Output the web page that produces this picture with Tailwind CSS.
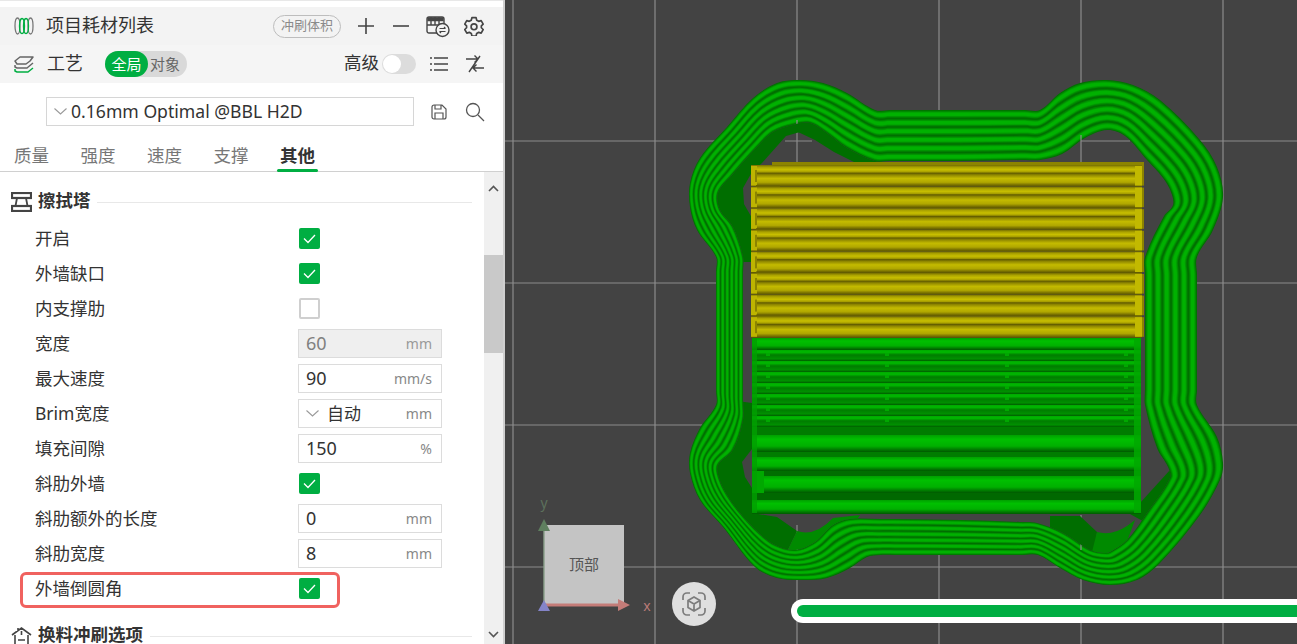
<!DOCTYPE html>
<html lang="zh">
<head>
  <meta charset="UTF-8">
  <title>Slicer</title>
  <script src="https://cdn.jsdelivr.net/npm/@tailwindcss/browser@4"></script>
</head>
<body class="w-[1297px] h-[644px] overflow-hidden bg-[#434343] font-['Noto_Sans','Noto_Sans_CJK_SC',sans-serif] text-[#333]">
<div class="flex h-[644px]">
  <!-- left panel -->
  <div class="w-[503px] h-[644px] bg-white flex flex-col shrink-0 overflow-hidden">
    <div class="h-[7px] bg-white border-t border-[#e8e8e8]"></div>
    <!-- filament row -->
    <div class="h-[38px] bg-[#f3f3f3] flex items-center relative">
      <svg class="ml-[14px] w-[20px] h-[20px]" viewBox="0 0 20 20" fill="none" stroke-width="1.300">
        <ellipse cx="3.500" cy="10" rx="2.500" ry="8" stroke="#777"/>
        <ellipse cx="16.500" cy="10" rx="2.500" ry="8" stroke="#777"/>
        <ellipse cx="8" cy="10" rx="2.500" ry="7.500" stroke="#00ae42"/>
        <ellipse cx="12" cy="10" rx="2.500" ry="7.500" stroke="#00ae42"/>
      </svg>
      <span class="ml-[12px] w-[107px] text-[18px] leading-none pb-[3px] text-[#333] whitespace-nowrap">项目耗材列表</span>
      <span class="ml-[120px] w-[68px] h-[23px] rounded-full border border-[#bdbdbd] flex items-center justify-center text-[13px] text-[#8a8a8a]">冲刷体积</span>
      <svg class="ml-[17px] w-[16px] h-[16px]" viewBox="0 0 16 16" stroke="#444" stroke-width="1.600"><path d="M8 0v16M0 8h16"/></svg>
      <svg class="ml-[19px] w-[16px] h-[16px]" viewBox="0 0 16 16" stroke="#444" stroke-width="1.600"><path d="M0 8h16"/></svg>
      <svg class="ml-[17px] w-[24px] h-[24px]" viewBox="0 0 24 24" fill="none" stroke="#444" stroke-width="1.400">
        <rect x="1" y="3" width="17" height="16" rx="2"/>
        <path d="M1 11h17M5 3v8M9 3v8M13 3v8" />
        <path d="M2 4h15v2.500H2z" fill="#444"/>
        <circle cx="16.500" cy="16" r="6.500" fill="#f3f3f3"/>
        <path d="M13.500 14.500h6M19.500 14.500l-1.500-1.500M19.500 17.500h-6M13.500 17.500l1.500 1.500" stroke-width="1.100"/>
      </svg>
      <svg class="ml-[14px] w-[20px] h-[20px]" viewBox="0 0 24 24" fill="none" stroke="#444" stroke-width="2" stroke-linejoin="round">
        <path d="M9.500 2h5l.7 3 2.400 1.400 3-.9 2.400 4.300-2.200 2.100v2.200l2.200 2.100-2.400 4.300-3-.9-2.400 1.400-.7 3h-5l-.7-3-2.400-1.400-3 .9L.9 16.200l2.200-2.100v-2.200L.9 9.800l2.400-4.300 3 .9 2.400-1.400z"/>
        <circle cx="12" cy="13" r="3.500"/>
      </svg>
    </div>
    <!-- process row -->
    <div class="h-[38px] bg-[#f5f5f5] flex items-center">
      <svg class="ml-[14px] w-[20px] h-[20px]" viewBox="0 0 20 20" fill="none" stroke-width="1.500" stroke-linejoin="round">
        <path d="M1 7l5-4h13l-3 4-4 3H3z" stroke="#666"/>
        <path d="M1 11v2l2 1h10l6-5" stroke="#666"/>
        <path d="M1 15v2l2 1h11l5-4" stroke="#00ae42"/>
      </svg>
      <span class="ml-[13px] text-[18px] leading-none pb-[3px]">工艺</span>
      <div class="ml-[22px] w-[82px] h-[26px] rounded-full bg-[#d9d9d9] flex items-center text-[15px]">
        <span class="w-[43px] h-[26px] rounded-full bg-[#00ae42] text-white flex items-center justify-center">全局</span>
        <span class="ml-[2px] text-[#666]">对象</span>
      </div>
      <span class="ml-[157px] text-[17.5px] leading-none pb-[3px]">高级</span>
      <div class="ml-[3px] w-[34px] h-[20px] rounded-full bg-[#dcdcdc] flex items-center pl-[1px]">
        <div class="w-[18px] h-[18px] rounded-full bg-white"></div>
      </div>
      <svg class="ml-[14px] w-[18px] h-[16px]" viewBox="0 0 18 16" stroke="#444" stroke-width="1.500"><path d="M4 2h14M4 8h14M4 14h14M0 2h2M0 8h2M0 14h2"/></svg>
      <svg class="ml-[17px] w-[20px] h-[20px]" viewBox="0 0 20 20" fill="none" stroke="#444" stroke-width="1.400"><path d="M1 5h12M9.500 1.500L13 5l-3.500 3.500M19 14H8M11.500 10.500L8 14l3.500 3.500M4 18L15 2"/></svg>
    </div>
    <!-- preset -->
    <div class="h-[57px] flex items-center pl-[46px]">
      <div class="w-[368px] h-[29px] border border-[#d6d6d6] flex items-center">
        <svg class="ml-[7px] w-[13px] h-[7px]" viewBox="0 0 13 7" fill="none" stroke="#9a9a9a" stroke-width="1.100"><path d="M0.500 0.500l6 5.500 6-5.500"/></svg>
        <span class="ml-[4px] text-[17.6px] leading-none pt-[1px] text-[#333] whitespace-nowrap">0.16mm Optimal @BBL H2D</span>
      </div>
      <svg class="ml-[17px] w-[16px] h-[16px]" viewBox="0 0 16 16" fill="none" stroke="#555" stroke-width="1.200"><path d="M1 3a2 2 0 012-2h8l4 4v8a2 2 0 01-2 2H3a2 2 0 01-2-2zM4 1v4h6V1M4 15V9h8v6"/></svg>
      <svg class="ml-[18px] w-[20px] h-[20px]" viewBox="0 0 20 20" fill="none" stroke="#555" stroke-width="1.300"><circle cx="8" cy="8" r="6.500"/><path d="M13 13l6 6"/></svg>
    </div>
    <!-- tabs -->
    <div class="h-[32px] border-b border-[#d0d0d0] flex pl-[14px] gap-[31.5px] text-[17.5px] leading-[30px] text-[#777] shrink-0">
      <span>质量</span><span>强度</span><span>速度</span><span>支撑</span>
      <span class="relative font-bold text-[#333]">其他<span class="absolute left-[-3px] right-[-3px] bottom-[-1px] h-[3px] rounded-full bg-[#00ae42]"></span></span>
    </div>
    <!-- settings -->
    <div class="relative flex flex-1 min-h-0 overflow-hidden">
      <div class="w-[484px] text-[17.5px] text-[#333]">
        <div class="mt-[11px] h-[38px] flex items-center">
          <svg class="ml-[11px] w-[21px] h-[20px]" viewBox="0 0 21 20" fill="none" stroke="#444" stroke-width="2.200"><rect x="1" y="1" width="19" height="5"/><rect x="1" y="14" width="19" height="5"/><path d="M6 6l-1.500 8M15 6l1.500 8" stroke-width="1.800"/></svg>
          <span class="ml-[6px] w-[53px] font-bold text-[17.5px] leading-none pb-[3px] whitespace-nowrap">擦拭塔</span>
          <div class="ml-[6px] w-[375px] h-px bg-[#e8e8e8]"></div>
        </div>
        <div class="h-[35px] flex items-center"><span class="w-[299px] pl-[35px] pb-[1px]">开启</span>
          <span class="w-[21px] h-[21px] rounded-[2px] bg-[#00ae42] flex items-center justify-center"><svg class="w-[13px] h-[10px]" viewBox="0 0 13 10" fill="none" stroke="#fff" stroke-width="1.300"><path d="M1 4.500l4 4 7-7.500"/></svg></span></div>
        <div class="h-[35px] flex items-center"><span class="w-[299px] pl-[35px] pb-[1px]">外墙缺口</span>
          <span class="w-[21px] h-[21px] rounded-[2px] bg-[#00ae42] flex items-center justify-center"><svg class="w-[13px] h-[10px]" viewBox="0 0 13 10" fill="none" stroke="#fff" stroke-width="1.300"><path d="M1 4.500l4 4 7-7.500"/></svg></span></div>
        <div class="h-[35px] flex items-center"><span class="w-[299px] pl-[35px] pb-[1px]">内支撑肋</span>
          <span class="w-[21px] h-[21px] rounded-[2px] border-2 border-[#cfcfcf] bg-white"></span></div>
        <div class="h-[35px] flex items-center"><span class="w-[298px] pl-[35px] pb-[1px]">宽度</span>
          <div class="w-[144px] h-[29px] border border-[#dcdcdc] bg-[#efefef] flex items-center justify-between pl-[7px] pr-[9px]"><span class="text-[18px] text-[#808080]">60</span><span class="text-[14px] text-[#999]">mm</span></div></div>
        <div class="h-[35px] flex items-center"><span class="w-[298px] pl-[35px] pb-[1px]">最大速度</span>
          <div class="w-[144px] h-[29px] border border-[#dcdcdc] flex items-center justify-between pl-[7px] pr-[9px]"><span class="text-[18px]">90</span><span class="text-[14px] text-[#888]">mm/s</span></div></div>
        <div class="h-[35px] flex items-center"><span class="w-[298px] pl-[35px] pb-[1px]">Brim宽度</span>
          <div class="w-[144px] h-[29px] border border-[#dcdcdc] flex items-center pl-[7px] pr-[9px]"><svg class="w-[13px] h-[7px]" viewBox="0 0 13 7" fill="none" stroke="#9a9a9a" stroke-width="1.100"><path d="M0.500 0.500l6 5.500 6-5.500"/></svg><span class="ml-[8px] text-[17px]">自动</span><span class="ml-auto text-[14px] text-[#888]">mm</span></div></div>
        <div class="h-[35px] flex items-center"><span class="w-[298px] pl-[35px] pb-[1px]">填充间隙</span>
          <div class="w-[144px] h-[29px] border border-[#dcdcdc] flex items-center justify-between pl-[7px] pr-[9px]"><span class="text-[18px]">150</span><span class="text-[14px] text-[#888]">%</span></div></div>
        <div class="h-[35px] flex items-center"><span class="w-[299px] pl-[35px] pb-[1px]">斜肋外墙</span>
          <span class="w-[21px] h-[21px] rounded-[2px] bg-[#00ae42] flex items-center justify-center"><svg class="w-[13px] h-[10px]" viewBox="0 0 13 10" fill="none" stroke="#fff" stroke-width="1.300"><path d="M1 4.500l4 4 7-7.500"/></svg></span></div>
        <div class="h-[35px] flex items-center"><span class="w-[298px] pl-[35px] pb-[1px]">斜肋额外的长度</span>
          <div class="w-[144px] h-[29px] border border-[#dcdcdc] flex items-center justify-between pl-[7px] pr-[9px]"><span class="text-[18px]">0</span><span class="text-[14px] text-[#888]">mm</span></div></div>
        <div class="h-[35px] flex items-center"><span class="w-[298px] pl-[35px] pb-[1px]">斜肋宽度</span>
          <div class="w-[144px] h-[29px] border border-[#dcdcdc] flex items-center justify-between pl-[7px] pr-[9px]"><span class="text-[18px]">8</span><span class="text-[14px] text-[#888]">mm</span></div></div>
        <div class="h-[35px] flex items-center"><span class="w-[299px] pl-[35px] pb-[1px]">外墙倒圆角</span>
          <span class="w-[21px] h-[21px] rounded-[2px] bg-[#00ae42] flex items-center justify-center"><svg class="w-[13px] h-[10px]" viewBox="0 0 13 10" fill="none" stroke="#fff" stroke-width="1.300"><path d="M1 4.500l4 4 7-7.500"/></svg></span></div>
        <div class="mt-[12px] h-[36px] flex items-center">
          <svg class="ml-[11px] w-[21px] h-[20px]" viewBox="0 0 21 20" fill="none" stroke="#444" stroke-width="1.600"><path d="M1 9l9.500-7 9.500 7M4 9v10h13V9M7 2v3M10.500 5v4M7 14h7"/></svg>
          <span class="ml-[6px] w-[106px] font-bold text-[17.5px] leading-none pb-[3px] whitespace-nowrap">换料冲刷选项</span>
          <div class="ml-[6px] w-[322px] h-px bg-[#e8e8e8]"></div>
        </div>
      </div>
      <!-- scrollbar -->
      <div class="w-[19px] bg-[#f0f0f0] flex flex-col items-center relative shrink-0">
        <svg class="mt-[13px] w-[11px] h-[7px]" viewBox="0 0 11 7" fill="none" stroke="#555" stroke-width="1.600"><path d="M1 6l4.500-4.500L10 6"/></svg>
        <div class="mt-[63px] w-[19px] h-[98px] bg-[#c9c9c9]"></div>
        <svg class="mt-auto mb-[6px] w-[11px] h-[7px]" viewBox="0 0 11 7" fill="none" stroke="#555" stroke-width="1.600"><path d="M1 1l4.500 4.500L10 1"/></svg>
      </div>
      <!-- callout round the last row -->
      <div class="absolute left-[20px] top-[400px] w-[320px] h-[36px] border-[3px] border-[#f0625f] rounded-[6px]"></div>
    </div>
  </div>
  <div class="w-[2px] bg-[#cfcfcf] shrink-0"></div>
  <!-- 3d view -->
  <div class="relative w-[792px] h-[644px] bg-[#434343] shrink-0">
    <svg id="view" class="absolute left-0 top-0" width="792" height="644" viewBox="505 0 792 644">
      <defs>
        <linearGradient id="yl" x1="0" y1="0" x2="0" y2="1">
          <stop offset="0" stop-color="#746c00"/><stop offset=".1" stop-color="#aaa200"/><stop offset=".22" stop-color="#c8bf00"/>
          <stop offset=".32" stop-color="#a89f00"/><stop offset=".38" stop-color="#625c00"/><stop offset=".46" stop-color="#8e8600"/>
          <stop offset=".62" stop-color="#c4bb00"/><stop offset=".8" stop-color="#b0a700"/><stop offset=".92" stop-color="#787000"/><stop offset="1" stop-color="#5a5400"/>
        </linearGradient>
        <linearGradient id="gt" x1="0" y1="0" x2="0" y2="1">
          <stop offset="0" stop-color="#00a800"/><stop offset=".2" stop-color="#00ba00"/><stop offset=".35" stop-color="#009400"/>
          <stop offset=".45" stop-color="#007c00"/><stop offset=".8" stop-color="#009000"/><stop offset="1" stop-color="#005c00"/>
        </linearGradient>
        <linearGradient id="gb" x1="0" y1="0" x2="0" y2="1">
          <stop offset="0" stop-color="#00a000"/><stop offset=".25" stop-color="#00c000"/><stop offset=".65" stop-color="#00b000"/>
          <stop offset=".85" stop-color="#007c00"/><stop offset="1" stop-color="#005800"/>
        </linearGradient>
        <clipPath id="inner"><path id="innerPath"/></clipPath>
      </defs>
      <g stroke="#8c8c8c" stroke-width="1.200">
        <path d="M513 0V644M655 0V644M797 0V644M939 0V644M1081 0V644M1223 0V644M505 141H1297M505 283H1297M505 425H1297M505 567H1297"/>
      </g>
      <g id="skirt"></g>
      <g id="brim" clip-path="url(#inner)"></g>
      <g id="model"></g>
      <!-- navigation cube -->
      <rect x="544" y="525" width="80" height="80" fill="#c4c4c4"/>
      <text x="584" y="570" text-anchor="middle" font-size="15" fill="#555" font-family="Noto Sans CJK SC">顶部</text>
      <path d="M544 604V530" stroke="#8aa08a" stroke-width="2" opacity=".7"/>
      <path d="M538 531l6-12 6 12z" fill="#5f7f5f"/>
      <path d="M544 605H620" stroke="#c47c78" stroke-width="3"/>
      <path d="M618 599l12 6-12 6z" fill="#c47c78"/>
      <path d="M538 611l6-11 6 11z" fill="#8484c8"/>
      <text x="544" y="508" text-anchor="middle" font-size="14" fill="#5c705c" font-family="Noto Sans">y</text>
      <text x="647" y="611" text-anchor="middle" font-size="14" fill="#b97b78" font-family="Noto Sans">x</text>
      <!-- camera button -->
      <circle cx="694" cy="604" r="22" fill="#dfdfdf"/>
      <g fill="none" stroke="#7c7c7c" stroke-width="1.700">
        <path d="M683 600v-3a4 4 0 014-4h3M698 593h3a4 4 0 014 4v3M705 608v3a4 4 0 01-4 4h-3M690 615h-3a4 4 0 01-4-4v-3"/>
        <path d="M694 597l6 3.500v7l-6 3.500-6-3.500v-7zM688 600.500l6 3.500 6-3.500M694 604v7"/>
      </g>
    </svg>
    <!-- progress bar, runs off the right edge -->
    <div class="absolute left-[286px] top-[599px] w-[520px] h-[24px] rounded-full bg-white pl-[6px] py-[6px]">
      <div class="h-[12px] rounded-full bg-[#00ae42]"></div>
    </div>
  </div>
</div>
<script>
  // skirt contour, outer and inner point for each station, clockwise from the top edge
  const pts = [
    [875,110,875,161],[890,110,890,161],[960,110,960,161],[1025,110,1025,160],[1040,110,1040,160],[1060,93,1062,154],[1080,83,1085,138],[1107,80,1107,130],
    [1133,85,1125,136],[1160,100,1147,160],[1200,140,1163,178],[1217,167,1171,192],[1223,197,1173,205],[1213,230,1164,216],
    [1197,257,1145,257],[1197,275,1145,275],[1197,330,1145,330],[1197,390,1145,390],[1197,405,1145,405],[1217,437,1157,448],[1223,463,1168,467],[1220,480,1170,478],
    [1200,515,1147,513],[1160,563,1127,540],[1137,580,1110,552],[1110,585,1105,553],[1083,580,1090,550],[1060,568,1063,533],
    [1038,555,1037,523],[1020,555,1020,522],[960,555,960,520],[895,555,895,519],[880,555,880,519],[867,557,850,519],[850,568,833,525],[827,578,815,542],
    [803,580,795,550],[777,578,775,545],[755,567,760,534],[723,527,740,513],[700,500,727,495],[690,473,719,478],
    [690,453,718,465],[700,428,733,450],[716,405,743,420],[716,390,743,400],[716,330,743,330],[716,272,743,272],[716,257,743,257],[697,230,733,227],
    [690,207,720,210],[690,183,718,193],[700,158,732,175],[727,127,757,147],[753,98,773,132],[777,83,793,125],
    [800,80,810,123],[823,83,827,133],[847,93,847,148]
  ];
  // cubic spline with handles scaled to the segment, so uneven stations do not overshoot
  function contour(t) {
    const p = pts.map(a => [a[0] + (a[2] - a[0]) * t, a[1] + (a[3] - a[1]) * t]);
    const n = p.length;
    const tan = p.map((b, i) => {
      const a = p[(i - 1 + n) % n], c = p[(i + 1) % n];
      const dx = c[0] - a[0], dy = c[1] - a[1], l = Math.hypot(dx, dy) || 1;
      return [dx / l, dy / l];
    });
    let d = `M${p[0][0]} ${p[0][1]}`;
    for (let i = 0; i < n; i++) {
      const j = (i + 1) % n, b = p[i], c = p[j];
      const h = Math.hypot(c[0] - b[0], c[1] - b[1]) / 3;
      d += `C${b[0] + tan[i][0] * h} ${b[1] + tan[i][1] * h} ${c[0] - tan[j][0] * h} ${c[1] - tan[j][1] * h} ${c[0]} ${c[1]}`;
    }
    return d + 'Z';
  }
  let skirt = '';
  const bands = 6, steps = 10;
  for (let b = 0; b < bands; b++) {
    for (let s = 0; s < steps; s++) {
      const k = 1 - Math.abs(2 * (s + .5) / steps - 1);
      const g = Math.round(100 + 78 * Math.min(1, k * 1.4));
      skirt += `<path d="${contour((b + s / steps) / bands)}" fill="rgb(0,${g},0)"/>`;
    }
  }
  skirt += `<path d="${contour(1)}" fill="#434343"/>`;
  // grid lines show through the holes, so put them back over the gray
  skirt += `<path d="M797 120V165M1081 135V163M1081 515V550M797 525V550M1081 141H1130M785 141H812" stroke="#8c8c8c" stroke-width="1.200"/>`;
  document.getElementById('skirt').innerHTML = skirt;
  document.getElementById('innerPath').setAttribute('d', contour(1));

  // dark brim in the corners, clipped to the inner loop of the skirt
  const dark = '#006e00';
  let brim = `<path d="M700 180L760 120L800 115L800 132L786 136L762 163L752 172L743 188L744 204L752 218V262H720Z" fill="${dark}"/>`;
  brim += `<path d="M800 115L880 150V165L856 163L834 152L815 140L798 132Z" fill="${dark}"/>`;
  brim += `<path d="M752 403V449L742 462L745 477L752 488V513L777 517L797 531L783 560L740 540L700 480L730 400Z" fill="${dark}"/>`;
  brim += `<path d="M1050 516H1080L1097 532L1093 560L1050 540Z" fill="${dark}"/>`;
  brim += `<path d="M1097 532Q1112 536 1127 526L1135 520L1120 560H1090Z" fill="#008a00"/>`;
  brim += `<path d="M797 531Q815 537 833 518L860 515L830 560H783Z" fill="#008a00"/>`;
  brim += `<path d="M1170 470L1185 484L1150 525L1130 514Z" fill="${dark}"/>`;
  document.getElementById('brim').innerHTML = brim;

  // yellow part: eight long U shaped runs
  let m = `<rect x="772" y="162" width="372" height="4" fill="#8c8400"/>`;
  for (let i = 0; i < 8; i++) {
    const y = 165 + i * 21.6;
    m += `<rect x="751" y="${y}" width="391" height="21.6" fill="url(#yl)"/>`;
    m += `<rect x="751" y="${y + 1}" width="6" height="19.6" fill="#bdb400"/><rect x="755" y="${y + 5}" width="2" height="12" fill="#8c8400"/>`;
    m += `<rect x="1135" y="${y + 1}" width="7" height="19.6" fill="#c2b900"/><rect x="1142" y="${y + 1}" width="2" height="19.6" fill="#8c8400"/>`;
    if (i < 7 && i % 2 == 0) m += `<rect x="756" y="${y + 20}" width="${i == 0 ? 24 : 34}" height="4" fill="#6a6300"/>`;
  }

  // green part: thin runs first, then the wide ones
  m += `<rect x="752" y="338" width="389" height="12" fill="url(#gb)"/>`;
  for (let i = 0; i < 7; i++) {
    const y = 350 + i * 11;
    m += `<rect x="752" y="${y}" width="389" height="11" fill="url(#gt)"/>`;
    for (const x of [768, 887, 1007, 1126]) m += `<rect x="${x - 2}" y="${y + 3}" width="4" height="3" fill="#00a800"/>`;
  }
  m += `<rect x="752" y="427" width="389" height="8" fill="#007c00"/>`;
  m += `<rect x="752" y="435" width="389" height="17" fill="url(#gb)"/>`;
  m += `<rect x="752" y="452" width="389" height="5" fill="#007c00"/>`;
  m += `<rect x="752" y="457" width="389" height="14" fill="url(#gb)"/>`;
  m += `<rect x="764" y="471" width="377" height="5" fill="#006e00"/>`;
  m += `<rect x="752" y="471" width="12" height="22" fill="#00a800"/>`;
  m += `<rect x="764" y="476" width="377" height="17" fill="url(#gb)"/>`;
  m += `<rect x="752" y="493" width="389" height="7" fill="#006800"/>`;
  m += `<rect x="752" y="500" width="389" height="14" fill="url(#gb)"/>`;
  m += `<rect x="752" y="338" width="5" height="175" fill="#00a000" opacity=".8"/>`;
  m += `<rect x="1134" y="338" width="7" height="175" fill="#00a800" opacity=".85"/>`;
  document.getElementById('model').innerHTML = m;
</script>
</body>
</html>
